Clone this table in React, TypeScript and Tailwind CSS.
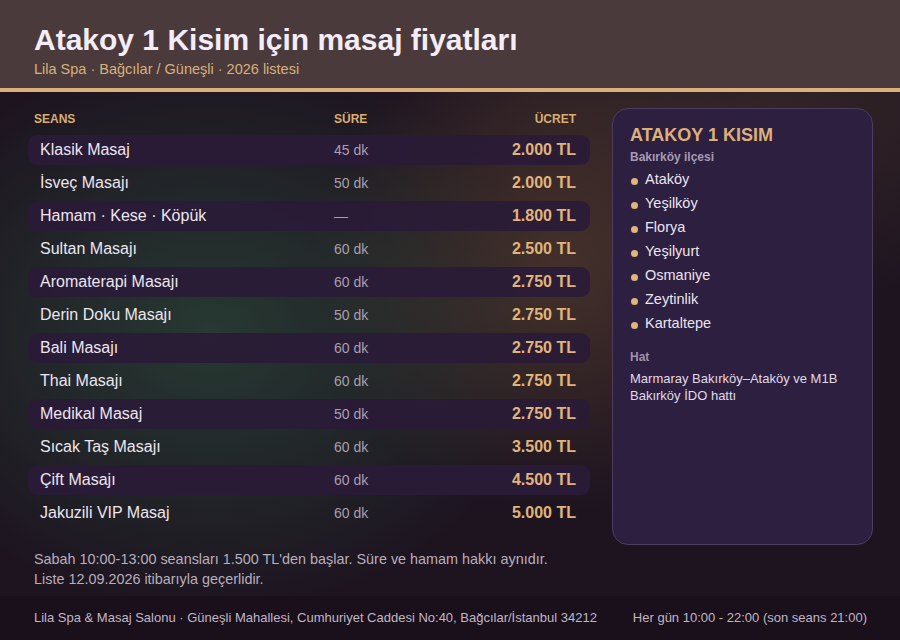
import React from 'react';

type Seans = { name: string; sure: string; ucret: string };

const SEANSLAR: Seans[] = [
  { name: 'Klasik Masaj', sure: '45 dk', ucret: '2.000 TL' },
  { name: 'İsveç Masajı', sure: '50 dk', ucret: '2.000 TL' },
  { name: 'Hamam · Kese · Köpük', sure: '—', ucret: '1.800 TL' },
  { name: 'Sultan Masajı', sure: '60 dk', ucret: '2.500 TL' },
  { name: 'Aromaterapi Masajı', sure: '60 dk', ucret: '2.750 TL' },
  { name: 'Derin Doku Masajı', sure: '50 dk', ucret: '2.750 TL' },
  { name: 'Bali Masajı', sure: '60 dk', ucret: '2.750 TL' },
  { name: 'Thai Masajı', sure: '60 dk', ucret: '2.750 TL' },
  { name: 'Medikal Masaj', sure: '50 dk', ucret: '2.750 TL' },
  { name: 'Sıcak Taş Masajı', sure: '60 dk', ucret: '3.500 TL' },
  { name: 'Çift Masajı', sure: '60 dk', ucret: '4.500 TL' },
  { name: 'Jakuzili VIP Masaj', sure: '60 dk', ucret: '5.000 TL' },
];

const SEMTLER = ['Ataköy', 'Yeşilköy', 'Florya', 'Yeşilyurt', 'Osmaniye', 'Zeytinlik', 'Kartaltepe'];

export default function App() {
  return (
    <div className="w-[900px] h-[640px] overflow-hidden bg-[#1d1420] font-['Liberation_Sans',Arial,sans-serif]">
      {/* başlık */}
      <header className="h-[92px] bg-[#4a3a3b] border-b-4 border-[#dcb07a] pl-[34px] pt-[22px]">
        <h1 className="text-[30px] leading-[36px] font-bold text-[#f4ecf6]">
          Atakoy 1 Kisim için masaj fiyatları
        </h1>
        <p className="text-[14.5px] leading-[18px] text-[#d7b17c] mt-[2px]">
          Lila Spa · Bağcılar / Güneşli · 2026 listesi
        </p>
      </header>

      {/* gövde */}
      <main className="h-[504px] flex items-start gap-[22px] pl-[28px] pt-[16px] bg-[radial-gradient(ellipse_340px_280px_at_210px_240px,rgba(45,82,62,0.6),transparent),radial-gradient(ellipse_250px_240px_at_560px_180px,rgba(100,72,50,0.55),transparent),radial-gradient(ellipse_420px_190px_at_760px_20px,rgba(72,52,45,0.5),transparent)]">
        <section className="w-[562px]">
          <div className="h-[20px] mt-[1px] flex items-center text-[12px] font-bold uppercase text-[#d9ad74] pr-[14px]">
            <span className="w-[306px] pl-[6px]">Seans</span>
            <span className="flex-1">Süre</span>
            <span>Ücret</span>
          </div>
          <div className="mt-[6px] flex flex-col gap-[3px]">
            {SEANSLAR.map((s, i) => (
              <div
                key={s.name}
                className={`h-[30px] flex items-center pl-[12px] pr-[14px] rounded-[9px] ${
                  i % 2 === 0 ? 'bg-[#2a1b37]/90' : ''
                }`}
              >
                <span className="w-[294px] text-[16px] text-[#ede5ef]">{s.name}</span>
                <span className="flex-1 text-[14px] text-[#a99fae]">{s.sure}</span>
                <span className="text-[16px] font-bold text-[#e0b47b]">{s.ucret}</span>
              </div>
            ))}
          </div>
          <div className="mt-[21px] pl-[6px] text-[14.4px] leading-[20px] text-[#b8aebd]">
            <p>Sabah 10:00-13:00 seansları 1.500 TL'den başlar. Süre ve hamam hakkı aynıdır.</p>
            <p>Liste 12.09.2026 itibarıyla geçerlidir.</p>
          </div>
        </section>

        {/* semt kartı */}
        <aside className="w-[261px] h-[437px] rounded-[16px] bg-[#2d1f3f] border border-[#4c3d5f] pl-[17px] pt-[16px]">
          <h2 className="text-[18px] leading-[20px] font-bold text-[#dcb07a]">ATAKOY 1 KISIM</h2>
          <p className="text-[12px] leading-[16px] font-bold text-[#a79bb3] mt-[4px]">Bakırköy ilçesi</p>
          <ul className="mt-[3px]">
            {SEMTLER.map((s) => (
              <li key={s} className="h-[24px] flex items-center gap-[7px] text-[14.5px] text-[#ece4f0]">
                <span className="w-[7px] h-[7px] rounded-full bg-[#e0b47b] ml-[1px] mt-[2px]" />
                {s}
              </li>
            ))}
          </ul>
          <p className="mt-[13px] text-[12px] leading-[16px] font-bold text-[#9f93a9]">Hat</p>
          <p className="mt-[5px] w-[228px] text-[13px] leading-[17px] text-[#e2d9e8]">
            Marmaray Bakırköy–Ataköy ve M1B Bakırköy İDO hattı
          </p>
        </aside>
      </main>

      {/* alt bilgi */}
      <footer className="h-[44px] bg-[#19101b] flex items-center justify-between pl-[34px] pr-[33px] text-[13px] text-[#c0b6c6]">
        <span>Lila Spa &amp; Masaj Salonu · Güneşli Mahallesi, Cumhuriyet Caddesi No:40, Bağcılar/İstanbul 34212</span>
        <span>Her gün 10:00 - 22:00 (son seans 21:00)</span>
      </footer>
    </div>
  );
}
